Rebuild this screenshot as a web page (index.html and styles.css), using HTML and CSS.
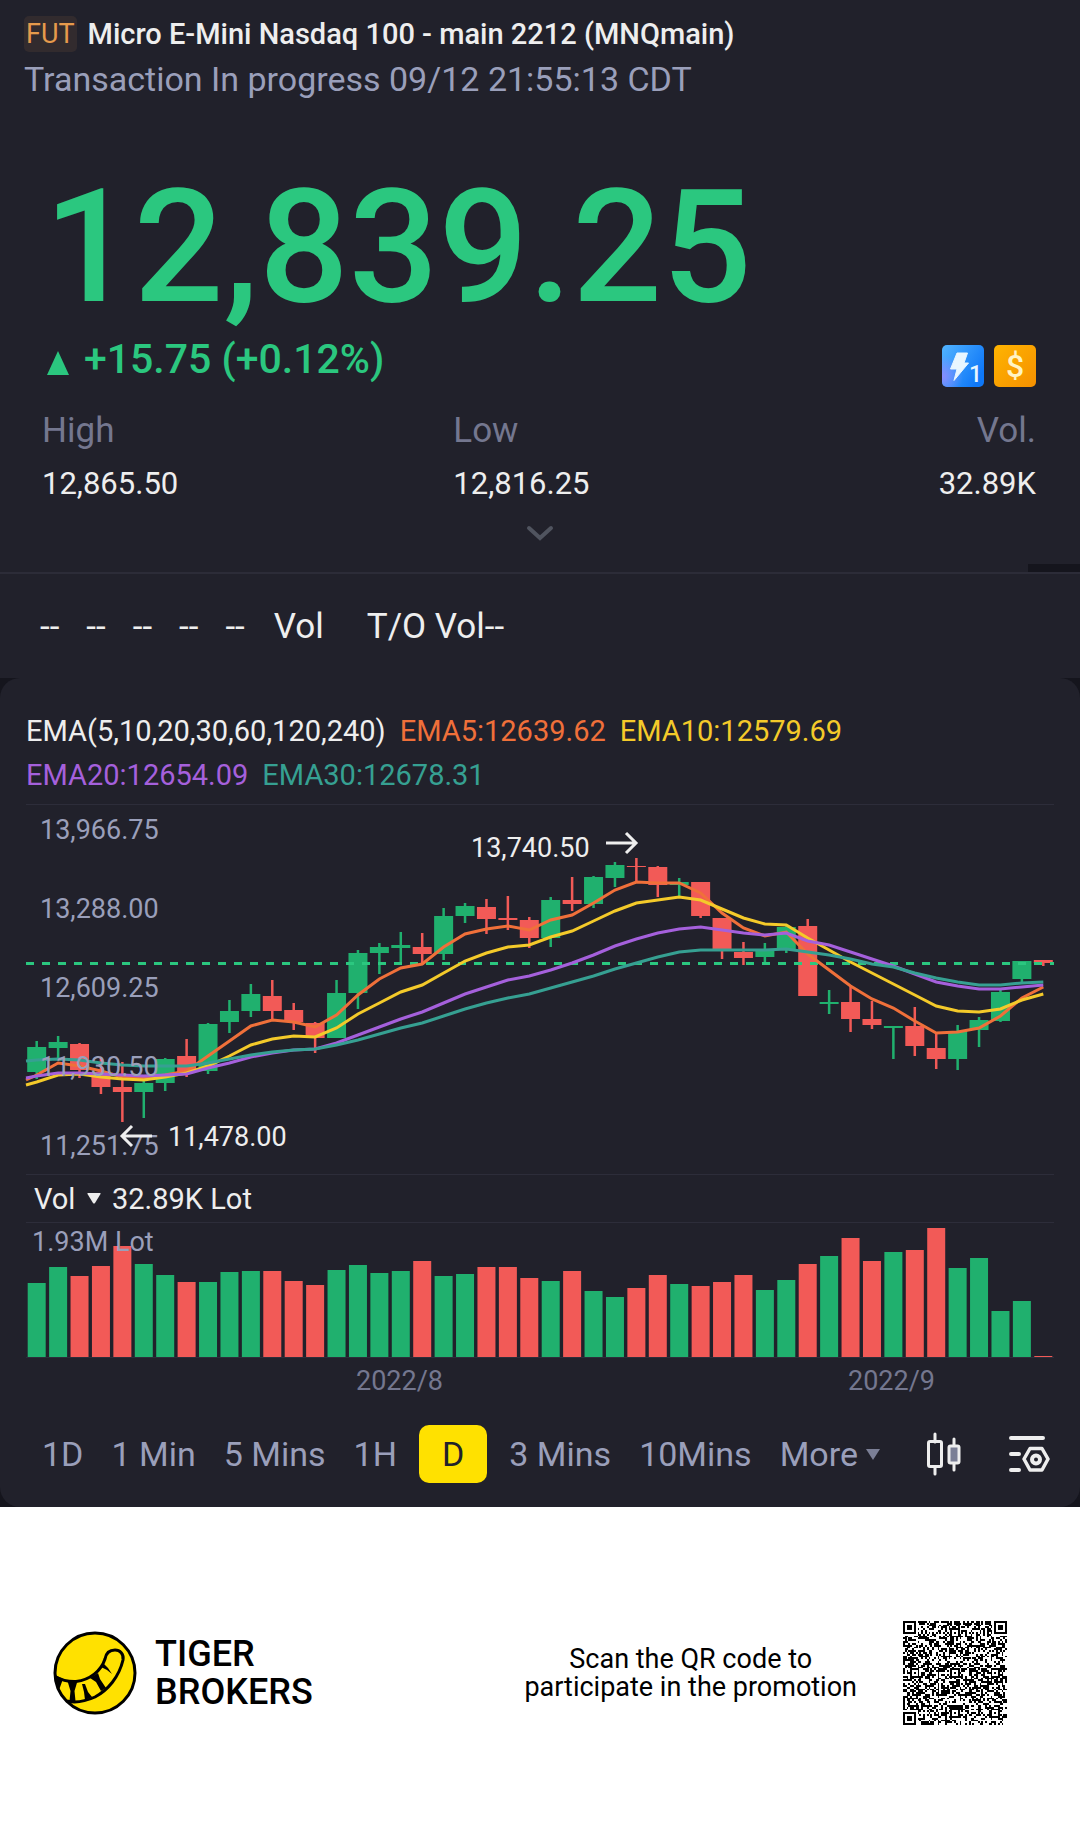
FILE: index.html
```
<!DOCTYPE html>
<html lang="en">
<head>
    <meta charset="UTF-8">
    <meta name="viewport" content="width=device-width, initial-scale=1.0">
    <title>Micro E-Mini Nasdaq 100 - main 2212 (MNQmain)</title>
    <link rel="stylesheet" href="styles.css">
</head>
<body>
    <main class="app">
        <header class="quote">
            <div class="title-row">
                <span class="badge">FUT</span>
                <h1>Micro E-Mini Nasdaq 100 - main 2212 (MNQmain)</h1>
            </div>
            <p class="status">Transaction In progress 09/12 21:55:13 CDT</p>
            <div class="price">12,839.25</div>
            <div class="change-row">
                <div class="change">
                    <svg class="up" viewBox="0 0 22 24"><path d="M11 0 22 24H0z" fill="#2bc77f"/></svg>
                    <span>+15.75 (+0.12%)</span>
                </div>
                <div class="tags">
                    <svg viewBox="0 0 42 42">
                        <defs>
                            <linearGradient id="blue" x1="0" y1="0" x2="1" y2="0.6">
                                <stop offset="0" stop-color="#52b4ff"/>
                                <stop offset="1" stop-color="#0f78f8"/>
                            </linearGradient>
                            <radialGradient id="violet" cx="0" cy="0.75" r="0.5">
                                <stop offset="0" stop-color="#8a8cff"/>
                                <stop offset="1" stop-color="#8a8cff" stop-opacity="0"/>
                            </radialGradient>
                        </defs>
                        <rect width="42" height="42" rx="5" fill="url(#blue)"/>
                        <rect width="42" height="42" rx="5" fill="url(#violet)"/>
                        <path d="M15 8h10.500l-3.500 10h4.500L12 35.500l3-11.500H8.500z" fill="#e8f6ff" stroke="#e8f6ff" stroke-linejoin="round"/>
                        <text x="27" y="37" class="tag-num">1</text>
                    </svg>
                    <svg viewBox="0 0 42 42">
                        <defs>
                            <linearGradient id="gold" x1="0" y1="0" x2="1" y2="1">
                                <stop offset="0" stop-color="#ffb400"/>
                                <stop offset="1" stop-color="#f59000"/>
                            </linearGradient>
                        </defs>
                        <rect width="42" height="42" rx="5" fill="url(#gold)"/>
                        <text x="21" y="32" class="tag-dollar">$</text>
                    </svg>
                </div>
            </div>
            <dl class="stats">
                <div><dt>High</dt><dd>12,865.50</dd></div>
                <div><dt>Low</dt><dd>12,816.25</dd></div>
                <div><dt>Vol.</dt><dd>32.89K</dd></div>
            </dl>
            <button class="expand" type="button" aria-label="Show more">
                <svg viewBox="0 0 28 16"><path d="M3 3 14 13 25 3" fill="none" stroke="#50545f" stroke-width="4" stroke-linecap="round"/></svg>
            </button>
        </header>

        <section class="ticks">
            <span>--</span><span>--</span><span>--</span><span>--</span><span>--</span>
            <span class="tick-vol">Vol</span>
            <span class="tick-to">T/O Vol--</span>
        </section>

        <div class="card-back">
            <section class="card">
                <p class="legend">
                    <span>EMA(5,10,20,30,60,120,240)</span>
                    <span class="ema5">EMA5:12639.62</span>
                    <span class="ema10">EMA10:12579.69</span>
                    <span class="ema20">EMA20:12654.09</span>
                    <span class="ema30">EMA30:12678.31</span>
                </p>
                <svg id="candles" class="chart" viewBox="0 0 1028 369"></svg>
                <div class="vol-head">
                    <select aria-label="Indicator"><option>Vol</option></select>
                    <svg class="caret" viewBox="0 0 14 11"><path d="M1 0h12q1 0 .5 1L8 10q-1 1-2 0L.5 1Q0 0 1 0z" fill="#eee"/></svg>
                    <span>32.89K Lot</span>
                </div>
                <svg id="volume" class="chart" viewBox="0 0 1028 135"></svg>
                <div class="dates"><span>2022/8</span><span>2022/9</span></div>
                <nav class="toolbar">
                    <button type="button">1D</button>
                    <button type="button">1 Min</button>
                    <button type="button">5 Mins</button>
                    <button type="button">1H</button>
                    <button type="button" class="active">D</button>
                    <button type="button">3 Mins</button>
                    <button type="button">10Mins</button>
                    <button type="button" class="more">More
                        <svg viewBox="0 0 14 11"><path d="M0 0h14L7 11z" fill="#7b7f96"/></svg>
                    </button>
                    <button type="button" class="icon" aria-label="Chart type">
                        <svg width="36" height="44" viewBox="0 0 36 44" fill="none" stroke="#eee" stroke-width="3" stroke-linecap="round">
                            <path d="M9 2v8M9 35v7M28 7v7M28 31v7"/>
                            <rect x="2.500" y="9.500" width="13" height="25" rx="1.500"/>
                            <rect x="23" y="14" width="10" height="17" rx="1.500" fill="#7b7f96"/>
                        </svg>
                    </button>
                    <button type="button" class="icon" aria-label="Chart settings">
                        <svg width="42" height="40" viewBox="0 0 42 40" fill="none" stroke="#eee" stroke-width="4" stroke-linecap="round" stroke-linejoin="round">
                            <path d="M3 4h32M3 20h8M3 36h8"/>
                            <path d="M22 14.500h12L40 25l-6 11H22l-6-11z" stroke-width="3.500"/>
                            <circle cx="28" cy="25.500" r="4"/>
                        </svg>
                    </button>
                </nav>
            </section>
        </div>
    </main>

    <footer class="footer">
        <svg class="logo" viewBox="0 0 84 84">
            <circle cx="42" cy="42" r="40" fill="#ffe100" stroke="#000" stroke-width="3"/>
            <path d="M2 45.500Q12 51 23 50.500C37 49 48 40 52 28c1-6 5-9 10-9s9 4 8 10C66 46 55 59 42 66c-9 4-20 6-28 4" fill="none" stroke="#000" stroke-width="3"/>
            <path d="M2 44l8 4-4 11Q2 52 2 44zM14.500 50h10l-3 10 1 10h-6l1-10zM29 53h3l3 8 4 5-7 3-1-8zM37 47l8-5 2 6 6 9-5 3-5-9zM48 36l3-3 4 4 4 6-5-4z"/>
        </svg>
        <strong class="brand">TIGER<br>BROKERS</strong>
        <p class="scan">Scan the QR code to<br>participate in the promotion</p>
        <svg id="qr" class="qr" viewBox="0 0 57 57" shape-rendering="crispEdges" role="img" aria-label="QR code"></svg>
    </footer>

    <script src="script.js"></script>
</body>
</html>
```
FILE: styles.css
```
* {
    box-sizing: border-box;
}
body {
    margin: 0;
    background: #fff;
    color: #eee;
    font-family: Roboto, "Liberation Sans", sans-serif;
    font-weight: 400;
}
h1, p, dl, dd {
    margin: 0;
}
button, select {
    padding: 0;
    border: none;
    background: none;
    color: inherit;
    font: inherit;
    appearance: none;
    cursor: pointer;
}
svg {
    display: block;
}
.app {
    background: #21212b;
}

/* quote */
.quote {
    position: relative;
    padding-top: 11px;
    border-bottom: 2px solid #2c2c38;
}
.quote::after {
    content: "";
    position: absolute;
    right: 0;
    bottom: 0;
    width: 52px;
    height: 8px;
    background: #15151d;
}
.title-row {
    display: flex;
    align-items: center;
    gap: 11px;
    height: 46px;
    padding: 0 24px;
}
.badge {
    padding: 0 2px;
    border-radius: 5px;
    background: #322b2e;
    color: #e69a4c;
    font-size: 27px;
    line-height: 36px;
}
h1 {
    font-size: 29px;
    font-weight: 500;
    line-height: 44px;
}
.status {
    padding: 0 24px;
    color: #9a9fba;
    font-size: 34px;
    line-height: 44px;
}
.price {
    margin-top: 67px;
    padding: 0 44px;
    color: #2bc77f;
    font-size: 158px;
    font-weight: 500;
    line-height: 158px;
}
.change-row {
    display: flex;
    justify-content: space-between;
    height: 77px;
    padding: 0 44px 0 47px;
}
.change {
    display: flex;
    align-items: center;
    gap: 15px;
    height: 66px;
    color: #2bc77f;
    font-size: 41px;
    font-weight: 500;
}
.up {
    width: 22px;
    height: 24px;
    margin-top: 8px;
}
.tags {
    display: flex;
    gap: 10px;
    margin-top: 19px;
}
.tags svg {
    width: 42px;
    height: 42px;
}
.tag-num {
    fill: #e8f6ff;
    font-size: 23px;
    font-weight: 500;
}
.tag-dollar {
    fill: #fff3c4;
    font-size: 32px;
    font-weight: 500;
    text-anchor: middle;
}
.stats {
    display: grid;
    grid-template-columns: 12fr 12fr 5fr;
    padding: 0 44px 0 42px;
}
.stats dt {
    color: #74778f;
    font-size: 35px;
    line-height: 56px;
}
.stats dd {
    font-size: 31px;
    line-height: 50px;
}
.stats div:last-child {
    text-align: right;
}
.expand {
    display: block;
    width: 100%;
    padding: 16px 0 31px;
}
.expand svg {
    width: 28px;
    height: 16px;
    margin: 0 auto;
}

/* tick line */
.ticks {
    display: flex;
    align-items: center;
    gap: 27px;
    height: 104px;
    padding: 0 40px;
    font-size: 35px;
}
.tick-vol {
    margin-left: 2px;
}
.tick-to {
    margin-left: 16px;
}

/* chart card */
.card-back {
    background: #15151d;
}
.card {
    padding: 31px 26px 24px;
    border-radius: 20px;
    background: #21212b;
}
.legend {
    display: flex;
    flex-wrap: wrap;
    column-gap: 14px;
    margin-bottom: 7px;
    font-size: 29px;
    line-height: 44px;
}
.ema5 {
    color: #f0703a;
}
.ema10 {
    color: #f4ca2a;
}
.ema20 {
    color: #a560dc;
}
.ema30 {
    color: #36a092;
}
.chart {
    width: 100%;
    border-top: 1px solid #2d2d3a;
    overflow: visible;
}
.chart text {
    font-size: 27px;
    fill: #9a9fba;
}
.chart .mark {
    fill: #eee;
}
.vol-head {
    display: flex;
    align-items: center;
    gap: 11px;
    height: 48px;
    padding-left: 8px;
    border-top: 1px solid #2d2d3a;
    font-size: 29px;
}
.caret {
    width: 14px;
    height: 11px;
}
.dates {
    display: flex;
    justify-content: space-between;
    padding: 0 119px 0 330px;
    color: #74778f;
    font-size: 27px;
    line-height: 46px;
}
.toolbar {
    display: flex;
    align-items: center;
    justify-content: space-between;
    margin-top: 21px;
    padding: 0 4px 0 16px;
    color: #9a9fba;
    font-size: 34px;
    line-height: 58px;
}
.active {
    margin: 0 -6px;
    padding: 0 23px;
    border-radius: 10px;
    background: #ffe100;
    color: #21212b;
}
.more {
    display: flex;
    align-items: center;
    gap: 8px;
}
.more svg {
    width: 14px;
    height: 11px;
}
.icon {
    margin-left: 18px;
}

/* footer */
.footer {
    display: flex;
    align-items: center;
    padding: 114px 73px 114px 53px;
    color: #000;
}
.logo {
    width: 84px;
    height: 84px;
}
.brand {
    margin-left: 18px;
    font-size: 36px;
    font-weight: 500;
    line-height: 38px;
}
.scan {
    margin: 0 46px 0 auto;
    font-size: 27px;
    line-height: 28px;
    text-align: center;
}
.qr {
    width: 104px;
    height: 104px;
}
```
FILE: script.js
```
var GREEN = '#20b06e';
var RED = '#f25a57';
var STEP = 21.417;
var FIRST = 10.7;

// direction, high, body top, body bottom, low
var candles = [
    ['g', 236, 242, 267, 274], ['g', 231, 237, 243, 254], ['r', 238, 239, 265, 273], ['r', 253, 267, 282, 289],
    ['r', 257, 282, 287, 317], ['g', 274, 278, 287, 313], ['g', 253, 254, 278, 286], ['r', 234, 251, 267, 272],
    ['g', 218, 219, 266, 269], ['g', 195, 206, 217, 228], ['g', 179, 189, 206, 212], ['r', 175, 191, 206, 215],
    ['r', 198, 205, 217, 225], ['r', 217, 218, 233, 248], ['g', 175, 188, 233, 233], ['g', 145, 148, 188, 204],
    ['g', 138, 142, 148, 169], ['g', 127, 140, 143, 158], ['r', 128, 142, 149, 160], ['g', 103, 111, 149, 155],
    ['g', 98, 101, 111, 118], ['r', 94, 102, 114, 129], ['r', 91, 113, 115, 125], ['r', 112, 115, 133, 143],
    ['g', 92, 95, 133, 142], ['r', 72, 95, 99, 106], ['g', 71, 72, 99, 103], ['g', 57, 60, 73, 82],
    ['r', 53, 61, 62, 77], ['r', 61, 62, 80, 92], ['g', 73, 77, 80, 91], ['r', 77, 77, 111, 113],
    ['r', 113, 113, 146, 154], ['r', 137, 147, 153, 160], ['g', 138, 146, 152, 159], ['g', 120, 122, 145, 148],
    ['r', 114, 121, 191, 191], ['g', 185, 197, 199, 209], ['r', 180, 197, 214, 227], ['r', 196, 214, 220, 224],
    ['g', 221, 221, 223, 254], ['r', 202, 221, 241, 251], ['r', 228, 243, 254, 264], ['g', 220, 226, 254, 265],
    ['g', 212, 215, 225, 242], ['g', 185, 187, 216, 217], ['g', 156, 156, 174, 178], ['r', 155, 155, 158, 161]
];

// first value sits on the left edge, the rest on the candles
var lines = {
    '#f0703a': [275, 270, 258, 261, 266, 272, 273, 270, 266, 251, 236, 221, 215, 217, 222, 210, 190, 174, 163, 159, 142, 129, 124, 121, 125, 115, 110, 98, 85, 77, 78, 78, 88, 108, 123, 131, 127, 149, 165, 181, 194, 203, 216, 228, 227, 223, 211, 193, 182],
    '#f4ca2a': [280, 277, 270, 269, 272, 274, 275, 272, 268, 261, 251, 240, 234, 231, 232, 223, 209, 198, 187, 180, 168, 156, 148, 142, 140, 132, 126, 116, 106, 98, 95, 92, 95, 104, 113, 119, 120, 133, 145, 157, 168, 179, 190, 201, 206, 207, 204, 195, 189],
    '#a560dc': [273, 271, 268, 268, 269, 270, 271, 270, 269, 263, 258, 252, 248, 245, 244, 238, 230, 222, 214, 207, 198, 189, 182, 175, 171, 165, 158, 150, 141, 134, 128, 124, 122, 125, 128, 130, 128, 136, 140, 147, 154, 161, 169, 177, 181, 184, 184, 182, 180],
    '#36a092': [256, 255, 254, 255, 258, 260, 261, 261, 261, 258, 254, 250, 247, 245, 244, 240, 235, 229, 223, 218, 211, 204, 198, 193, 189, 183, 177, 171, 164, 158, 152, 147, 145, 145, 145, 145, 144, 147, 150, 154, 159, 162, 168, 173, 177, 180, 180, 178, 177]
};

var volumes = [74, 90, 81, 91, 111, 93, 82, 75, 75, 85, 86, 86, 76, 72, 87, 92, 84, 86, 96, 81, 83, 90, 90, 79,
    76, 86, 66, 60, 69, 82, 73, 71, 75, 82, 67, 77, 93, 101, 119, 96, 105, 107, 129, 89, 99, 46, 56, 1];

function rect(x, y, w, h, fill) {
    return '<rect x="' + x + '" y="' + y + '" width="' + w + '" height="' + h + '" fill="' + fill + '"/>';
}

function drawCandles() {
    var out = '';
    candles.forEach(function(c, i) {
        var x = FIRST + i * STEP;
        var color = c[0] === 'g' ? GREEN : RED;
        out += rect(x - 1.25, c[1], 2.5, c[4] - c[1], color);
        out += rect(x - 9.5, c[2], 19, Math.max(c[3] - c[2], 1), color);
    });
    out += '<path d="M0 158.500H1028" stroke="#2bc77f" stroke-width="3" stroke-dasharray="8 8"/>';
    Object.keys(lines).forEach(function(color) {
        var points = lines[color].map(function(y, i) {
            return (i === 0 ? 0 : FIRST + (i - 1) * STEP) + ',' + y;
        });
        out += '<polyline points="' + points.join(' ') + '" fill="none" stroke="' + color + '" stroke-width="3"/>';
    });
    ['13,966.75', '13,288.00', '12,609.25', '11,930.50', '11,251.75'].forEach(function(label, i) {
        out += '<text x="14" y="' + (34 + i * 79) + '">' + label + '</text>';
    });
    // highest and lowest price
    out += '<text class="mark" x="445" y="52">13,740.50</text>';
    out += '<text class="mark" x="142" y="341">11,478.00</text>';
    out += '<path d="M580 38h30M600 28l10 10-10 10M126 331H96M106 321l-10 10 10 10" fill="none" stroke="#eee" stroke-width="3"/>';
    document.getElementById('candles').innerHTML = out;
}

function drawVolume() {
    var out = '';
    volumes.forEach(function(v, i) {
        out += rect(FIRST + i * STEP - 9, 134 - v, 18, v, candles[i][0] === 'g' ? GREEN : RED);
    });
    out += rect(0, 134, 1028, 1, '#2d2d3a');
    out += '<text x="6" y="28">1.93M Lot</text>';
    document.getElementById('volume').innerHTML = out;
}

function drawQr() {
    var size = 57;
    var seed = 2212;
    var d = '';

    // ring pattern with its centre at cx, cy
    function ring(x, y, cx, cy, r) {
        var dist = Math.max(Math.abs(x - cx), Math.abs(y - cy));
        if (dist > r) return null;
        return r === 2 ? dist !== 1 : (dist !== 2 && dist !== 4);
    }

    for (var y = 0; y < size; y++) {
        for (var x = 0; x < size; x++) {
            seed = (seed * 1103515245 + 12345) % 2147483648;
            var on = null;
            [[3, 3, 4], [53, 3, 4], [3, 53, 4], [28, 6, 2], [6, 28, 2], [28, 28, 2], [50, 28, 2], [28, 50, 2], [50, 50, 2]].forEach(function(p) {
                if (on === null) on = ring(x, y, p[0], p[1], p[2]);
            });
            if (on === null && (x === 6 || y === 6)) on = (x + y) % 2 === 0;
            if (on === null) on = (seed >> 16) % 2 === 0;
            if (on) d += 'M' + x + ' ' + y + 'h1v1h-1z';
        }
    }
    document.getElementById('qr').innerHTML = '<path d="' + d + '"/>';
}

drawCandles();
drawVolume();
drawQr();
```
